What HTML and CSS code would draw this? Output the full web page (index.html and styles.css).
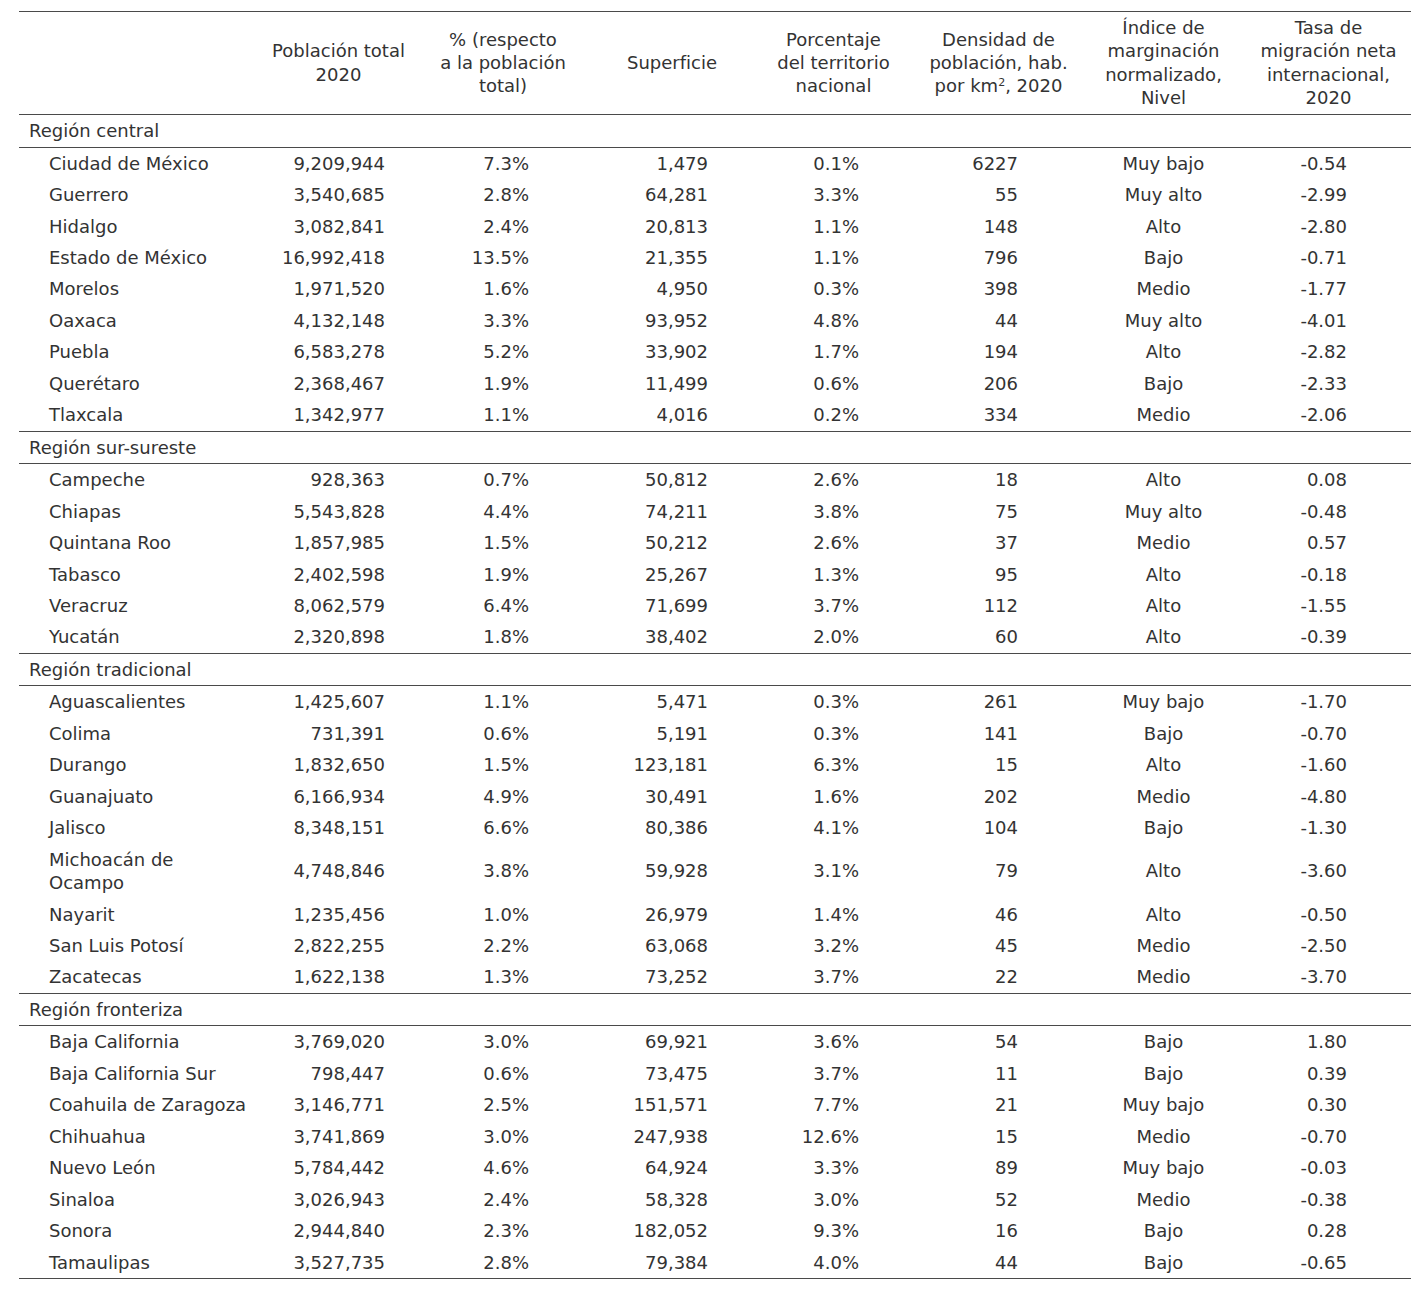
FILE: index.html
```html
<!DOCTYPE html>
<html lang="es">
<head>
<meta charset="utf-8">
<title>Regiones de México</title>
<link rel="stylesheet" href="styles.css">
</head>
<body>
<table class="tbl">
  <colgroup>
    <col class="w-name"><col class="w2"><col class="w3"><col class="w4"><col class="w5"><col class="w6"><col class="w7"><col class="w8">
  </colgroup>
  <thead>
    <tr>
      <th></th>
      <th>Población total<br>2020</th>
      <th>% (respecto<br>a la población<br>total)</th>
      <th class="h-sup">Superficie</th>
      <th>Porcentaje<br>del territorio<br>nacional</th>
      <th>Densidad de<br>población, hab.<br>por km<sup>2</sup>, 2020</th>
      <th>Índice de<br>marginación<br>normalizado,<br>Nivel</th>
      <th>Tasa de<br>migración neta<br>internacional,<br>2020</th>
    </tr>
  </thead>
  <tbody>
    <tr class="region"><td colspan="8">Región central</td></tr>
    <tr><td class="name">Ciudad de México</td><td class="c2">9,209,944</td><td class="c3">7.3%</td><td class="c4">1,479</td><td class="c5">0.1%</td><td class="c6">6227</td><td class="c7">Muy bajo</td><td class="c8">-0.54</td></tr>
    <tr><td class="name">Guerrero</td><td class="c2">3,540,685</td><td class="c3">2.8%</td><td class="c4">64,281</td><td class="c5">3.3%</td><td class="c6">55</td><td class="c7">Muy alto</td><td class="c8">-2.99</td></tr>
    <tr><td class="name">Hidalgo</td><td class="c2">3,082,841</td><td class="c3">2.4%</td><td class="c4">20,813</td><td class="c5">1.1%</td><td class="c6">148</td><td class="c7">Alto</td><td class="c8">-2.80</td></tr>
    <tr><td class="name">Estado de México</td><td class="c2">16,992,418</td><td class="c3">13.5%</td><td class="c4">21,355</td><td class="c5">1.1%</td><td class="c6">796</td><td class="c7">Bajo</td><td class="c8">-0.71</td></tr>
    <tr><td class="name">Morelos</td><td class="c2">1,971,520</td><td class="c3">1.6%</td><td class="c4">4,950</td><td class="c5">0.3%</td><td class="c6">398</td><td class="c7">Medio</td><td class="c8">-1.77</td></tr>
    <tr><td class="name">Oaxaca</td><td class="c2">4,132,148</td><td class="c3">3.3%</td><td class="c4">93,952</td><td class="c5">4.8%</td><td class="c6">44</td><td class="c7">Muy alto</td><td class="c8">-4.01</td></tr>
    <tr><td class="name">Puebla</td><td class="c2">6,583,278</td><td class="c3">5.2%</td><td class="c4">33,902</td><td class="c5">1.7%</td><td class="c6">194</td><td class="c7">Alto</td><td class="c8">-2.82</td></tr>
    <tr><td class="name">Querétaro</td><td class="c2">2,368,467</td><td class="c3">1.9%</td><td class="c4">11,499</td><td class="c5">0.6%</td><td class="c6">206</td><td class="c7">Bajo</td><td class="c8">-2.33</td></tr>
    <tr class="last"><td class="name">Tlaxcala</td><td class="c2">1,342,977</td><td class="c3">1.1%</td><td class="c4">4,016</td><td class="c5">0.2%</td><td class="c6">334</td><td class="c7">Medio</td><td class="c8">-2.06</td></tr>

    <tr class="region"><td colspan="8">Región sur-sureste</td></tr>
    <tr><td class="name">Campeche</td><td class="c2">928,363</td><td class="c3">0.7%</td><td class="c4">50,812</td><td class="c5">2.6%</td><td class="c6">18</td><td class="c7">Alto</td><td class="c8">0.08</td></tr>
    <tr><td class="name">Chiapas</td><td class="c2">5,543,828</td><td class="c3">4.4%</td><td class="c4">74,211</td><td class="c5">3.8%</td><td class="c6">75</td><td class="c7">Muy alto</td><td class="c8">-0.48</td></tr>
    <tr><td class="name">Quintana Roo</td><td class="c2">1,857,985</td><td class="c3">1.5%</td><td class="c4">50,212</td><td class="c5">2.6%</td><td class="c6">37</td><td class="c7">Medio</td><td class="c8">0.57</td></tr>
    <tr><td class="name">Tabasco</td><td class="c2">2,402,598</td><td class="c3">1.9%</td><td class="c4">25,267</td><td class="c5">1.3%</td><td class="c6">95</td><td class="c7">Alto</td><td class="c8">-0.18</td></tr>
    <tr><td class="name">Veracruz</td><td class="c2">8,062,579</td><td class="c3">6.4%</td><td class="c4">71,699</td><td class="c5">3.7%</td><td class="c6">112</td><td class="c7">Alto</td><td class="c8">-1.55</td></tr>
    <tr class="last"><td class="name">Yucatán</td><td class="c2">2,320,898</td><td class="c3">1.8%</td><td class="c4">38,402</td><td class="c5">2.0%</td><td class="c6">60</td><td class="c7">Alto</td><td class="c8">-0.39</td></tr>

    <tr class="region"><td colspan="8">Región tradicional</td></tr>
    <tr><td class="name">Aguascalientes</td><td class="c2">1,425,607</td><td class="c3">1.1%</td><td class="c4">5,471</td><td class="c5">0.3%</td><td class="c6">261</td><td class="c7">Muy bajo</td><td class="c8">-1.70</td></tr>
    <tr><td class="name">Colima</td><td class="c2">731,391</td><td class="c3">0.6%</td><td class="c4">5,191</td><td class="c5">0.3%</td><td class="c6">141</td><td class="c7">Bajo</td><td class="c8">-0.70</td></tr>
    <tr><td class="name">Durango</td><td class="c2">1,832,650</td><td class="c3">1.5%</td><td class="c4">123,181</td><td class="c5">6.3%</td><td class="c6">15</td><td class="c7">Alto</td><td class="c8">-1.60</td></tr>
    <tr><td class="name">Guanajuato</td><td class="c2">6,166,934</td><td class="c3">4.9%</td><td class="c4">30,491</td><td class="c5">1.6%</td><td class="c6">202</td><td class="c7">Medio</td><td class="c8">-4.80</td></tr>
    <tr><td class="name">Jalisco</td><td class="c2">8,348,151</td><td class="c3">6.6%</td><td class="c4">80,386</td><td class="c5">4.1%</td><td class="c6">104</td><td class="c7">Bajo</td><td class="c8">-1.30</td></tr>
    <tr><td class="name">Michoacán de<br>Ocampo</td><td class="c2">4,748,846</td><td class="c3">3.8%</td><td class="c4">59,928</td><td class="c5">3.1%</td><td class="c6">79</td><td class="c7">Alto</td><td class="c8">-3.60</td></tr>
    <tr><td class="name">Nayarit</td><td class="c2">1,235,456</td><td class="c3">1.0%</td><td class="c4">26,979</td><td class="c5">1.4%</td><td class="c6">46</td><td class="c7">Alto</td><td class="c8">-0.50</td></tr>
    <tr><td class="name">San Luis Potosí</td><td class="c2">2,822,255</td><td class="c3">2.2%</td><td class="c4">63,068</td><td class="c5">3.2%</td><td class="c6">45</td><td class="c7">Medio</td><td class="c8">-2.50</td></tr>
    <tr class="last"><td class="name">Zacatecas</td><td class="c2">1,622,138</td><td class="c3">1.3%</td><td class="c4">73,252</td><td class="c5">3.7%</td><td class="c6">22</td><td class="c7">Medio</td><td class="c8">-3.70</td></tr>

    <tr class="region"><td colspan="8">Región fronteriza</td></tr>
    <tr><td class="name">Baja California</td><td class="c2">3,769,020</td><td class="c3">3.0%</td><td class="c4">69,921</td><td class="c5">3.6%</td><td class="c6">54</td><td class="c7">Bajo</td><td class="c8">1.80</td></tr>
    <tr><td class="name">Baja California Sur</td><td class="c2">798,447</td><td class="c3">0.6%</td><td class="c4">73,475</td><td class="c5">3.7%</td><td class="c6">11</td><td class="c7">Bajo</td><td class="c8">0.39</td></tr>
    <tr><td class="name">Coahuila de Zaragoza</td><td class="c2">3,146,771</td><td class="c3">2.5%</td><td class="c4">151,571</td><td class="c5">7.7%</td><td class="c6">21</td><td class="c7">Muy bajo</td><td class="c8">0.30</td></tr>
    <tr><td class="name">Chihuahua</td><td class="c2">3,741,869</td><td class="c3">3.0%</td><td class="c4">247,938</td><td class="c5">12.6%</td><td class="c6">15</td><td class="c7">Medio</td><td class="c8">-0.70</td></tr>
    <tr><td class="name">Nuevo León</td><td class="c2">5,784,442</td><td class="c3">4.6%</td><td class="c4">64,924</td><td class="c5">3.3%</td><td class="c6">89</td><td class="c7">Muy bajo</td><td class="c8">-0.03</td></tr>
    <tr><td class="name">Sinaloa</td><td class="c2">3,026,943</td><td class="c3">2.4%</td><td class="c4">58,328</td><td class="c5">3.0%</td><td class="c6">52</td><td class="c7">Medio</td><td class="c8">-0.38</td></tr>
    <tr><td class="name">Sonora</td><td class="c2">2,944,840</td><td class="c3">2.3%</td><td class="c4">182,052</td><td class="c5">9.3%</td><td class="c6">16</td><td class="c7">Bajo</td><td class="c8">0.28</td></tr>
    <tr class="last"><td class="name">Tamaulipas</td><td class="c2">3,527,735</td><td class="c3">2.8%</td><td class="c4">79,384</td><td class="c5">4.0%</td><td class="c6">44</td><td class="c7">Bajo</td><td class="c8">-0.65</td></tr>
  </tbody>
</table>
</body>
</html>
```

FILE: styles.css
```css
html, body {
  margin: 0;
  padding: 0;
  background: #ffffff;
}

body {
  padding: 11px 9px 0 19px;
  font-family: Verdana, "DejaVu Sans", sans-serif;
  font-size: 18px;
  color: #333333;
}

.tbl {
  width: 1392px;
  border-collapse: collapse;
  table-layout: fixed;
  border-top: 1px solid #4a4a4a;
  border-bottom: 1px solid #4a4a4a;
}

.w-name { width: 238px; }
.w2 { width: 163px; }
.w3 { width: 166px; }
.w4 { width: 165px; }
.w5 { width: 165px; }
.w6 { width: 165px; }
.w7 { width: 165px; }
.w8 { width: 165px; }

.tbl th {
  font-weight: normal;
  text-align: center;
  vertical-align: middle;
  line-height: 23.3px;
  padding: 4px 0 5px;
  border-bottom: 1px solid #4a4a4a;
}

.tbl th.h-sup {
  padding-left: 7px;
}

.tbl th sup {
  font-size: 11px;
  line-height: 0;
  vertical-align: 6px;
}

.tbl td {
  line-height: 23.46px;
  padding: 4px 0;
  vertical-align: middle;
  text-align: right;
  white-space: nowrap;
}

.tbl .region td {
  text-align: left;
  padding-left: 10px;
  border-top: 1px solid #4a4a4a;
  border-bottom: 1px solid #4a4a4a;
}

.tbl td.name {
  text-align: left;
  padding-left: 30px;
}

.tbl td.c2 { padding-right: 35px; }
.tbl td.c3 { padding-right: 57px; }
.tbl td.c4 { padding-right: 43px; }
.tbl td.c5 { padding-right: 57px; }
.tbl td.c6 { padding-right: 63px; }
.tbl td.c7 { text-align: center; }
.tbl td.c8 { padding-right: 64px; }
```
